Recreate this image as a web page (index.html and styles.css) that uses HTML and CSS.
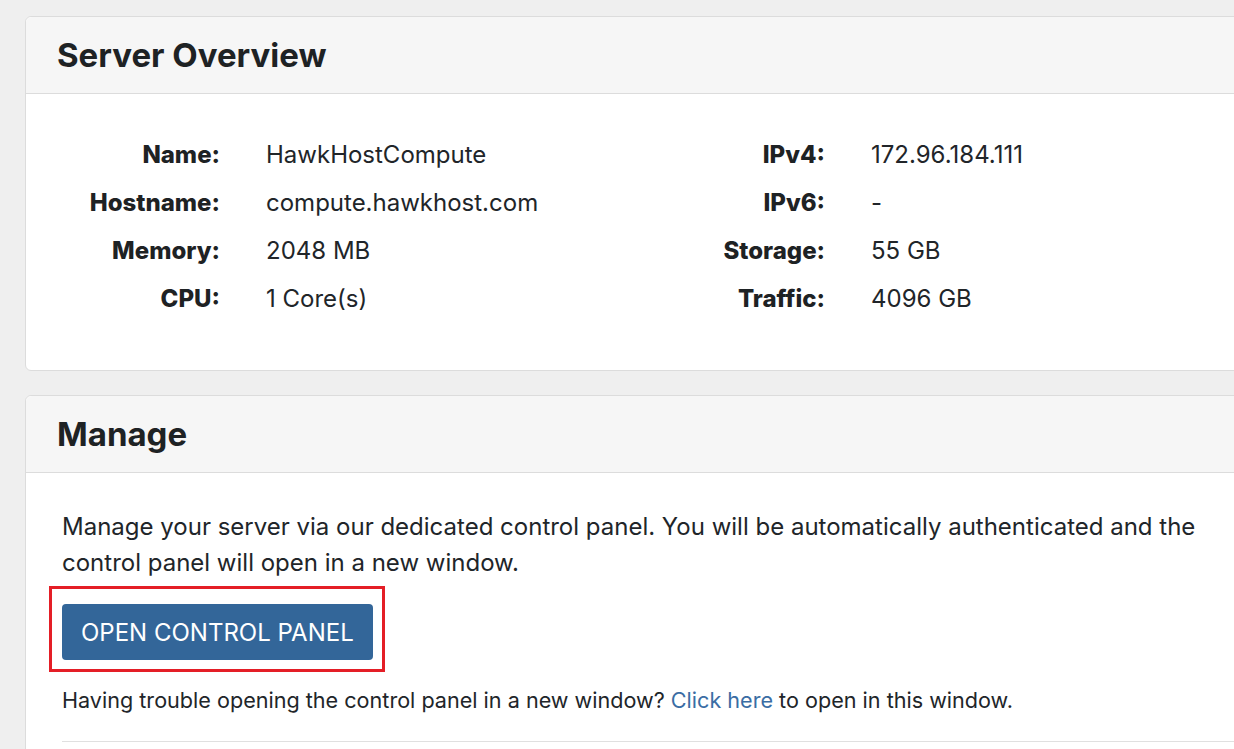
FILE: index.html
```html
<!DOCTYPE html>
<html lang="en">
<head>
<meta charset="utf-8">
<title>Server Overview</title>
<link rel="stylesheet" href="styles.css">
</head>
<body>
<main class="page">
  <section class="card">
    <header class="card-header"><h2 class="card-title">Server Overview</h2></header>
    <div class="card-body info-body">
      <dl class="info-grid">
        <dt>Name:</dt><dd>HawkHostCompute</dd>
        <dt>IPv4:</dt><dd>172.96.184.111</dd>
        <dt>Hostname:</dt><dd>compute.hawkhost.com</dd>
        <dt>IPv6:</dt><dd>-</dd>
        <dt>Memory:</dt><dd>2048 MB</dd>
        <dt>Storage:</dt><dd>55 GB</dd>
        <dt>CPU:</dt><dd>1 Core(s)</dd>
        <dt>Traffic:</dt><dd>4096 GB</dd>
      </dl>
    </div>
  </section>
  <section class="card">
    <header class="card-header"><h2 class="card-title">Manage</h2></header>
    <div class="card-body manage-body">
      <p class="lead">Manage your server via our dedicated control panel. You will be automatically authenticated and the control panel will open in a new window.</p>
      <div class="btn-wrap">
        <button class="btn-primary" type="button">OPEN CONTROL PANEL</button>
      </div>
      <p class="note">Having trouble opening the control panel in a new window? <a href="#" class="link">Click here</a> to open in this window.</p>
      <hr class="divider">
    </div>
  </section>
</main>
</body>
</html>
```
FILE: styles.css
```css
html, body {
  margin: 0;
  padding: 0;
  overflow: hidden;
}
body {
  background: #efefef;
  font-family: Inter, "Noto Sans", "Liberation Sans", sans-serif;
  color: #212529;
}
.page {
  width: 1262px;
  padding: 16px 0 0 25px;
  display: flex;
  flex-direction: column;
  gap: 24px;
}
.card {
  background: #fff;
  border: 1px solid #dcdcdc;
  border-radius: 6px;
}
.card-header {
  background: #f6f6f6;
  border-bottom: 1px solid #dcdcdc;
  border-radius: 6px 6px 0 0;
  height: 76px;
  padding: 0 31px;
  display: flex;
  align-items: center;
}
.card-title {
  margin: 0;
  font-size: 33px;
  font-weight: 700;
  color: #1e2224;
}
.card-body {
  padding: 36px 36px 0 36px;
}
.info-body {
  padding-bottom: 48px;
}
.manage-body {
  padding-bottom: 40px;
}
.info-grid {
  margin: 0;
  display: grid;
  grid-template-columns: 158px 355px 158px 1fr;
  column-gap: 46px;
  grid-auto-rows: 48px;
  align-items: center;
  font-size: 24px;
}
.info-grid dt {
  text-align: right;
  font-weight: 800;
  color: #1e2224;
}
.info-grid dd {
  margin: 0;
  color: #212529;
}
.lead {
  margin: 0;
  font-size: 24px;
  line-height: 36px;
}
.btn-wrap {
  position: relative;
  align-self: flex-start;
  display: inline-block;
  margin-top: 23px;
}
.btn-wrap::after {
  content: "";
  position: absolute;
  top: -18px;
  left: -13px;
  right: -12px;
  bottom: -12px;
  border: 3px solid #e41e26;
}
.btn-primary {
  display: block;
  background: #336699;
  color: #fff;
  border: 0;
  border-radius: 4px;
  height: 56px;
  padding: 0 19px;
  font-family: inherit;
  font-size: 24px;
}
.note {
  margin: 25px 0 0;
  font-size: 21.6px;
  line-height: 30px;
}
.link {
  color: #3a6da4;
  text-decoration: none;
}
.divider {
  margin: 26px 0 0;
  border: 0;
  border-top: 1px solid #e0e0e0;
}
```
